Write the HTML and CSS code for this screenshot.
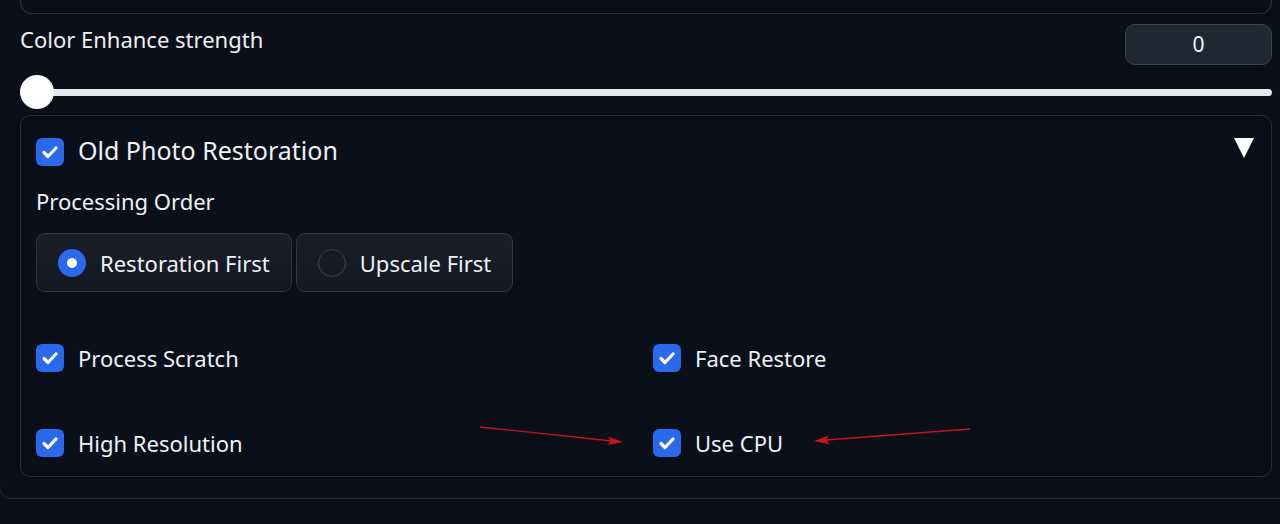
FILE: index.html
```html
<!DOCTYPE html>
<html lang="en">
<head>
<meta charset="utf-8">
<title>Old Photo Restoration</title>
<link rel="stylesheet" href="styles.css">
</head>
<body>
<div class="panel">
  <div class="top-box"></div>

  <div class="slider-head">
    <span class="label">Color Enhance strength</span>
    <div class="num-box">0</div>
  </div>
  <div class="slider">
    <div class="track"></div>
    <div class="thumb"></div>
  </div>

  <div class="accordion">
    <div class="acc-head">
      <label class="check big">
        <span class="box"><svg viewBox="0 0 28 28"><path d="M8 14.5l4 4 8-8.5"/></svg></span>
        <span class="check-text">Old Photo Restoration</span>
      </label>
      <span class="caret"></span>
    </div>

    <div class="label order">Processing Order</div>
    <div class="radio-group">
      <div class="radio-btn selected"><span class="dot"></span><span>Restoration First</span></div>
      <div class="radio-btn"><span class="dot"></span><span>Upscale First</span></div>
    </div>

    <div class="options">
      <label class="check">
        <span class="box"><svg viewBox="0 0 28 28"><path d="M8 14.5l4 4 8-8.5"/></svg></span>
        <span class="check-text">Process Scratch</span>
      </label>
      <label class="check">
        <span class="box"><svg viewBox="0 0 28 28"><path d="M8 14.5l4 4 8-8.5"/></svg></span>
        <span class="check-text">Face Restore</span>
      </label>
      <label class="check">
        <span class="box"><svg viewBox="0 0 28 28"><path d="M8 14.5l4 4 8-8.5"/></svg></span>
        <span class="check-text">High Resolution</span>
      </label>
      <label class="check">
        <span class="box"><svg viewBox="0 0 28 28"><path d="M8 14.5l4 4 8-8.5"/></svg></span>
        <span class="check-text">Use CPU</span>
      </label>
    </div>
  </div>
</div>

<svg class="arrows" width="1280" height="524" viewBox="0 0 1280 524">
  <g stroke="#c8151b" stroke-width="1.3" fill="none">
    <line x1="480" y1="427" x2="612" y2="441"/>
    <line x1="970" y1="429" x2="826" y2="440"/>
  </g>
  <g fill="#d0121a">
    <polygon points="623,442 608,436.5 611,441 607,445"/>
    <polygon points="814,441 829,435.5 826,440 830,444.5"/>
  </g>
</svg>
</body>
</html>
```

FILE: styles.css
```css
html, body {
  margin: 0;
  padding: 0;
  background: #0b0f19;
  height: 100%;
  overflow: hidden;
}

body {
  font-family: "Noto Sans", "Open Sans", sans-serif;
  color: #eef1f5;
  position: relative;
}

.arrows {
  position: absolute;
  left: 0;
  top: 0;
  pointer-events: none;
}

.panel {
  width: 1252px;
  margin-top: -60px;
  margin-left: -1px;
  padding: 0 19px 21px 20px;
  border: 1px solid #262b36;
  border-radius: 12px;
}

.top-box {
  height: 72px;
  border: 1px solid #2a303b;
  border-top: none;
  border-radius: 0 0 12px 12px;
}

.slider-head {
  display: flex;
  justify-content: space-between;
  align-items: flex-start;
  margin-top: 10px;
  height: 41px;
}

.label {
  font-size: 22px;
  line-height: 30px;
}

.num-box {
  width: 145px;
  height: 39px;
  border: 1px solid #394250;
  border-radius: 10px;
  background: #1f2734;
  text-align: center;
  font-size: 21px;
  line-height: 39px;
  color: #f1f4f8;
}

.slider {
  position: relative;
  margin-top: 10px;
  height: 34px;
  display: flex;
  align-items: center;
}

.track {
  flex: 1;
  height: 7px;
  border-radius: 4px;
  background: #e6e8ee;
}

.thumb {
  position: absolute;
  left: 0;
  top: 0;
  width: 34px;
  height: 34px;
  border-radius: 50%;
  background: #ffffff;
}

.accordion {
  margin-top: 6px;
  border: 1px solid #2a2f3b;
  border-radius: 10px;
  padding: 0 16px 19px 15px;
}

.acc-head {
  display: flex;
  justify-content: space-between;
  align-items: center;
  padding-top: 22px;
}

.check {
  display: flex;
  align-items: center;
  gap: 14px;
}

.box {
  width: 28px;
  height: 28px;
  border-radius: 6px;
  background: #2b69ec;
  display: flex;
  flex: none;
}

.box svg {
  width: 28px;
  height: 28px;
}

.box path {
  fill: none;
  stroke: #ffffff;
  stroke-width: 3.2;
  stroke-linecap: round;
  stroke-linejoin: round;
}

.check-text {
  font-size: 22px;
  line-height: 28px;
}

.check.big .check-text {
  font-size: 25px;
  position: relative;
  top: -2px;
}

.caret {
  width: 0;
  height: 0;
  border-left: 10.5px solid transparent;
  border-right: 10.5px solid transparent;
  border-top: 20px solid #ffffff;
  margin-right: 1px;
  position: relative;
  top: -4px;
}

.order {
  margin-top: 20px;
}

.radio-group {
  display: flex;
  gap: 4px;
  margin-top: 17px;
}

.radio-btn {
  display: flex;
  align-items: center;
  gap: 14px;
  height: 57px;
  padding: 0 21px;
  border: 1px solid #313743;
  border-radius: 9px;
  background: linear-gradient(180deg, #191e29 0%, #131822 100%);
  font-size: 22px;
}

.radio-btn .dot {
  width: 28px;
  height: 28px;
  border-radius: 50%;
  border: 1px solid #3d4350;
  background: #161b25;
  box-sizing: border-box;
  flex: none;
}

.radio-btn.selected .dot {
  border: 9.5px solid #2b69ec;
  background: #ffffff;
}

.options {
  display: grid;
  grid-template-columns: 617px 1fr;
  row-gap: 57px;
  margin-top: 52px;
}
```
